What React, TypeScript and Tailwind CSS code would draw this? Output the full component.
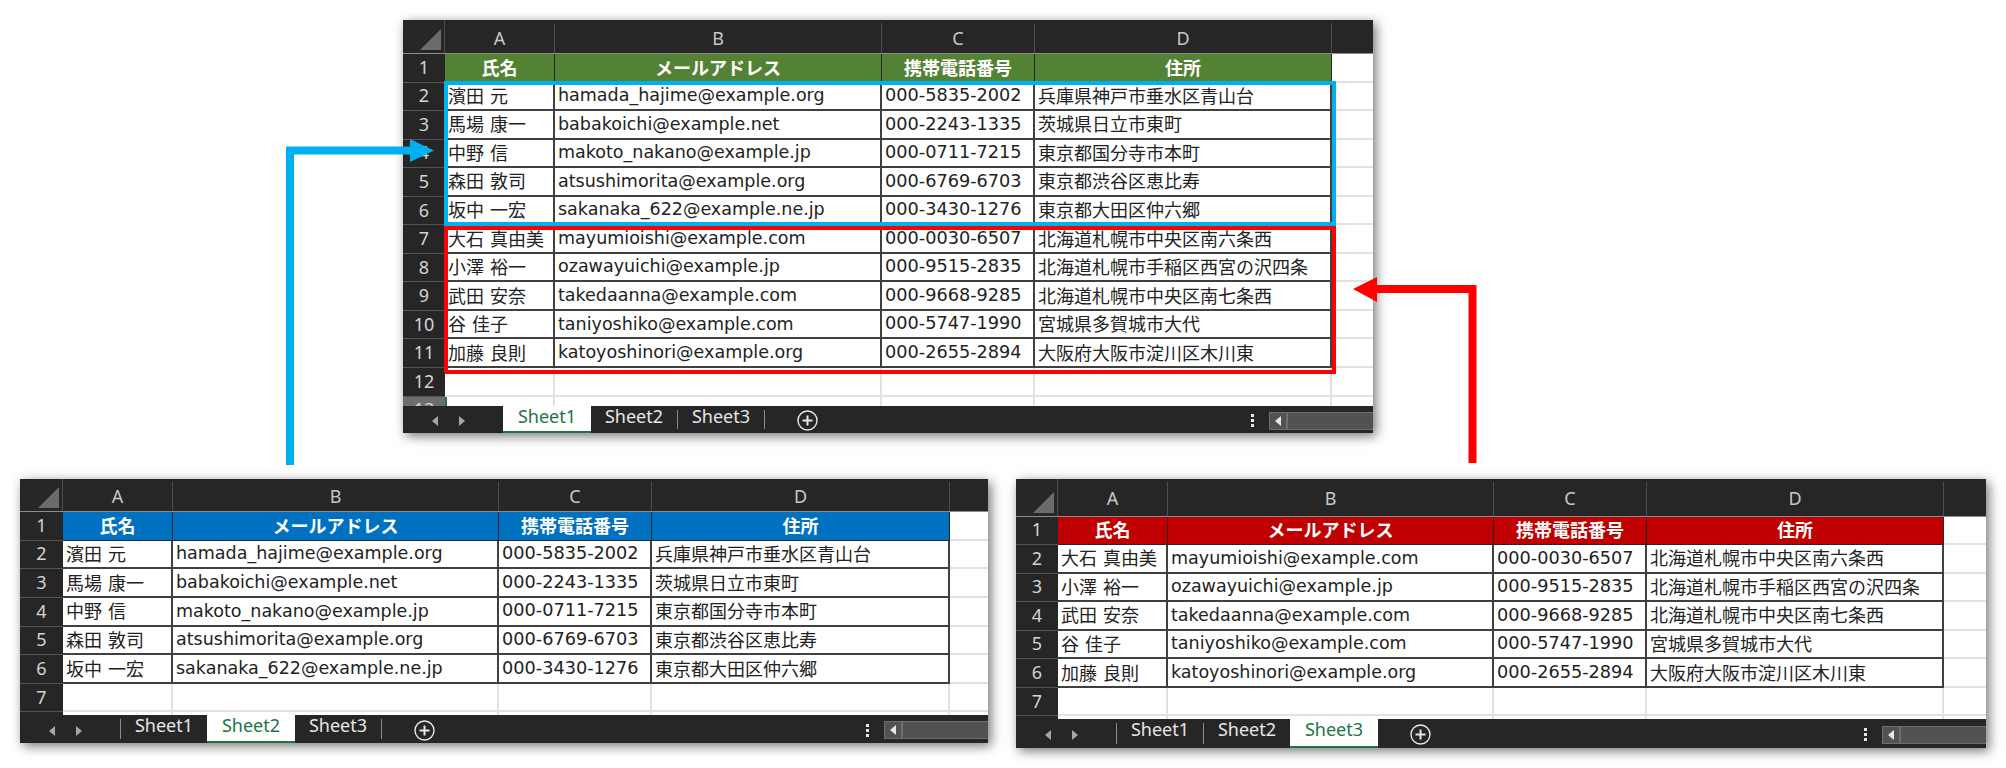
const sans = "font-['Noto_Sans','Noto_Sans_CJK_JP',sans-serif]";
const latin = "font-['DejaVu_Sans','Noto_Sans_CJK_JP',sans-serif]";
const cjk = "font-['Noto_Sans_CJK_JP',sans-serif]";

const people = [
  ["濱田 元", "hamada_hajime@example.org", "000-5835-2002", "兵庫県神戸市垂水区青山台"],
  ["馬場 康一", "babakoichi@example.net", "000-2243-1335", "茨城県日立市東町"],
  ["中野 信", "makoto_nakano@example.jp", "000-0711-7215", "東京都国分寺市本町"],
  ["森田 敦司", "atsushimorita@example.org", "000-6769-6703", "東京都渋谷区恵比寿"],
  ["坂中 一宏", "sakanaka_622@example.ne.jp", "000-3430-1276", "東京都大田区仲六郷"],
  ["大石 真由美", "mayumioishi@example.com", "000-0030-6507", "北海道札幌市中央区南六条西"],
  ["小澤 裕一", "ozawayuichi@example.jp", "000-9515-2835", "北海道札幌市手稲区西宮の沢四条"],
  ["武田 安奈", "takedaanna@example.com", "000-9668-9285", "北海道札幌市中央区南七条西"],
  ["谷 佳子", "taniyoshiko@example.com", "000-5747-1990", "宮城県多賀城市大代"],
  ["加藤 良則", "katoyoshinori@example.org", "000-2655-2894", "大阪府大阪市淀川区木川東"],
];

const heads = ["氏名", "メールアドレス", "携帯電話番号", "住所"];

function Corner() {
  return (
    <div className="relative h-full border-r border-[#4d4d4d]">
      <svg className="absolute right-[3px] bottom-[3px]" width="21" height="21" viewBox="0 0 21 21">
        <polygon points="21,0 21,21 0,21" fill="#6b6b6b" />
      </svg>
    </div>
  );
}

function Tri({ dir }: { dir: "l" | "r" }) {
  return (
    <svg width="6" height="10" viewBox="0 0 6 10">
      <polygon points={dir === "l" ? "6,0 6,10 0,5" : "0,0 0,10 6,5"} fill="#a6a6a6" />
    </svg>
  );
}

function PlusCircle() {
  return (
    <svg width="21" height="21" viewBox="0 0 21 21" fill="none" stroke="#e8e8e8">
      <circle cx="10.5" cy="10.5" r="9.5" strokeWidth="1.4" />
      <path d="M5.5 10.5h10M10.5 5.5v10" strokeWidth="2" />
    </svg>
  );
}

function TabBar({ active, h, sepFirst }: { active: number; h: string; sepFirst: boolean }) {
  return (
    <div className={`flex ${h} shrink-0 items-stretch bg-[#262626]`}>
      <div className="flex w-[100px] shrink-0 items-center gap-[21px] pl-[29px] pt-[3px]">
        <Tri dir="l" />
        <Tri dir="r" />
      </div>
      {sepFirst && active !== 1 && <div className="my-[4px] w-px bg-[#8a8a8a]" />}
      {[1, 2, 3].map((n) => (
        <div key={n} className="flex items-stretch">
          {n === active ? (
            <div className={`w-[88px] border-b-2 border-[#217346] bg-white pb-[5px] text-center text-[18px] leading-[21px] text-[#217346] ${sans}`}>
              Sheet{n}
            </div>
          ) : (
            <div className={`w-[86px] pb-[5px] text-center text-[18px] leading-[21px] text-[#e6e6e6] ${sans}`}>
              Sheet{n}
            </div>
          )}
          {n !== active && n + 1 !== active && <div className="my-[4px] w-px bg-[#8a8a8a]" />}
        </div>
      ))}
      <div className="ml-[32px] flex items-center pt-[2px]">
        <PlusCircle />
      </div>
      <div className="ml-auto flex items-center pt-[2px]">
        <div className="flex flex-col gap-[2px]">
          <span className="h-[3px] w-[3px] bg-[#e8e8e8]" />
          <span className="h-[3px] w-[3px] bg-[#e8e8e8]" />
          <span className="h-[3px] w-[3px] bg-[#e8e8e8]" />
        </div>
        <div className="ml-[15px] flex h-[18px] w-[104px] border border-r-0 border-[#6e6e6e] bg-[#525252]">
          <div className="flex w-[18px] items-center justify-center border-r-2 border-[#6e6e6e]">
            <svg width="6" height="10" viewBox="0 0 6 10"><polygon points="6,0 6,10 0,5" fill="#e8e8e8" /></svg>
          </div>
        </div>
      </div>
    </div>
  );
}

type SheetProps = {
  cols: string;
  pos: string;
  rows: string[][];
  head: string;
  rowH: string;
  headH: string;
  active: number;
  barH: string;
  blanks: string[];
  sepFirst: boolean;
  last: string;
  marked?: boolean;
};

function Sheet({ cols, pos, rows, head, rowH, headH, active, barH, blanks, sepFirst, last, marked }: SheetProps) {
  const letters = ["A", "B", "C", "D"];
  const cell = `${rowH} flex items-center overflow-hidden border-r-2 border-b-2 border-[#404040] pb-[1px] pl-[3px] whitespace-nowrap text-[#222]`;
  const rowNum = `${rowH} flex items-center justify-center border-b border-[#555] pb-[1px] text-[18px] ${sans}`;
  return (
    <div className={`absolute ${pos} flex flex-col overflow-hidden bg-white shadow-[3px_3px_11px_rgba(0,0,0,0.55)]`}>
      <div className="min-h-0 flex-1 overflow-hidden">
        <div className={`grid ${cols}`}>
          {/* column header */}
          <div className={`${headH} border-b border-[#8c8c8c] bg-[#262626]`}><Corner /></div>
          {letters.map((l) => (
            <div key={l} className={`${headH} flex items-center justify-center border-b border-[#8c8c8c] bg-[#262626] pt-[3px]`}>
              <div className={`flex h-full w-full items-center justify-center border-r border-[#4d4d4d] text-[18px] text-[#c8c8c8] ${sans}`}>{l}</div>
            </div>
          ))}
          <div className={`${headH} border-b border-[#8c8c8c] bg-[#262626]`} />

          {/* title row */}
          <div className={`${rowNum} bg-[#262626] text-[#d4d4d4]`}>1</div>
          {heads.map((t) => (
            <div key={t} className={`${rowH} ${head} flex items-center justify-center border-r border-b border-[#262626] pb-[1px] text-[18px] font-bold text-white ${cjk}`}>{t}</div>
          ))}
          <div className={`${rowH} border-b-2 border-[#e2e2e2]`} />

          {/* data rows */}
          {rows.map((r, i) => (
            <div key={r[1]} className="contents">
              <div className={`${rowNum} bg-[#262626] text-[#d4d4d4]`}>{i + 2}</div>
              <div className={`${cell} text-[18px] [word-spacing:2px] ${cjk}`}>{r[0]}</div>
              <div className={`${cell} text-[17.5px] ${latin}`}>{r[1]}</div>
              <div className={`${cell} text-[17.7px] ${latin}`}>{r[2]}</div>
              <div className={`${cell} text-[18px] ${cjk}`}>{r[3]}</div>
              <div className={`${rowH} border-b-2 border-[#e2e2e2]`} />
            </div>
          ))}

          {/* empty rows */}
          {blanks.map((n, idx) => (
            <div key={n} className="contents">
              <div className={`${rowNum} ${idx === blanks.length - 1 ? last : "bg-[#262626] text-[#d4d4d4]"}`}>{n}</div>
              {[0, 1, 2, 3].map((c) => (
                <div
                  key={c}
                  className={`${rowH} border-r-2 border-b-2 border-[#e2e2e2] ${marked && c === 0 && idx === blanks.length - 1 ? "border-l-2 border-l-[#217346]" : ""}`}
                />
              ))}
              <div className={`${rowH} border-b-2 border-[#e2e2e2]`} />
            </div>
          ))}
        </div>
      </div>
      <TabBar active={active} h={barH} sepFirst={sepFirst} />
    </div>
  );
}

export default function App() {
  return (
    <div className="relative h-[768px] w-[2006px] overflow-hidden bg-white">
      <Sheet
        pos="left-[403px] top-[20px] h-[413px] w-[970px]"
        cols="grid-cols-[42px_110px_327px_153px_297px_41px]"
        rows={people}
        head="bg-[#548235]"
        rowH="h-[28.55px]"
        headH="h-[34px]"
        active={1}
        barH="h-[27px]"
        blanks={["12", "13"]}
        sepFirst={false}
        last="bg-[#6e6e6e] text-[#d4d4d4]"
        marked
      />
      <Sheet
        pos="left-[20px] top-[479px] h-[264px] w-[968px]"
        cols="grid-cols-[43px_110px_326px_153px_298px_38px]"
        rows={people.slice(0, 5)}
        head="bg-[#0070c0]"
        rowH="h-[28.65px]"
        headH="h-[33px]"
        active={2}
        barH="h-[28px]"
        blanks={["7", " "]}
        sepFirst
        last="bg-[#262626] text-[#d4d4d4]"
      />
      <Sheet
        pos="left-[1016px] top-[479px] h-[269px] w-[970px]"
        cols="grid-cols-[42px_110px_326px_153px_297px_42px]"
        rows={people.slice(5)}
        head="bg-[#c00000]"
        rowH="h-[28.55px]"
        headH="h-[37.5px]"
        active={3}
        barH="h-[29px]"
        blanks={["7", " "]}
        sepFirst
        last="bg-[#262626] text-[#d4d4d4]"
      />

      {/* highlight frames */}
      <div className="absolute left-[444px] top-[81px] h-[145px] w-[892px] border-4 border-[#00b0f0]" />
      <div className="absolute left-[444px] top-[226px] h-[148px] w-[892px] border-4 border-[#ff0000]" />

      {/* connector arrows */}
      <svg className="absolute left-0 top-0" width="2006" height="768" viewBox="0 0 2006 768">
        <path d="M290 465V150.5H412" fill="none" stroke="#00b0f0" strokeWidth="8" />
        <polygon points="410,139 434,150.5 410,162" fill="#00b0f0" />
        <path d="M1472.5 463V289H1376" fill="none" stroke="#ff0000" strokeWidth="8" />
        <polygon points="1377,277 1353,289 1377,302" fill="#ff0000" />
      </svg>
    </div>
  );
}
